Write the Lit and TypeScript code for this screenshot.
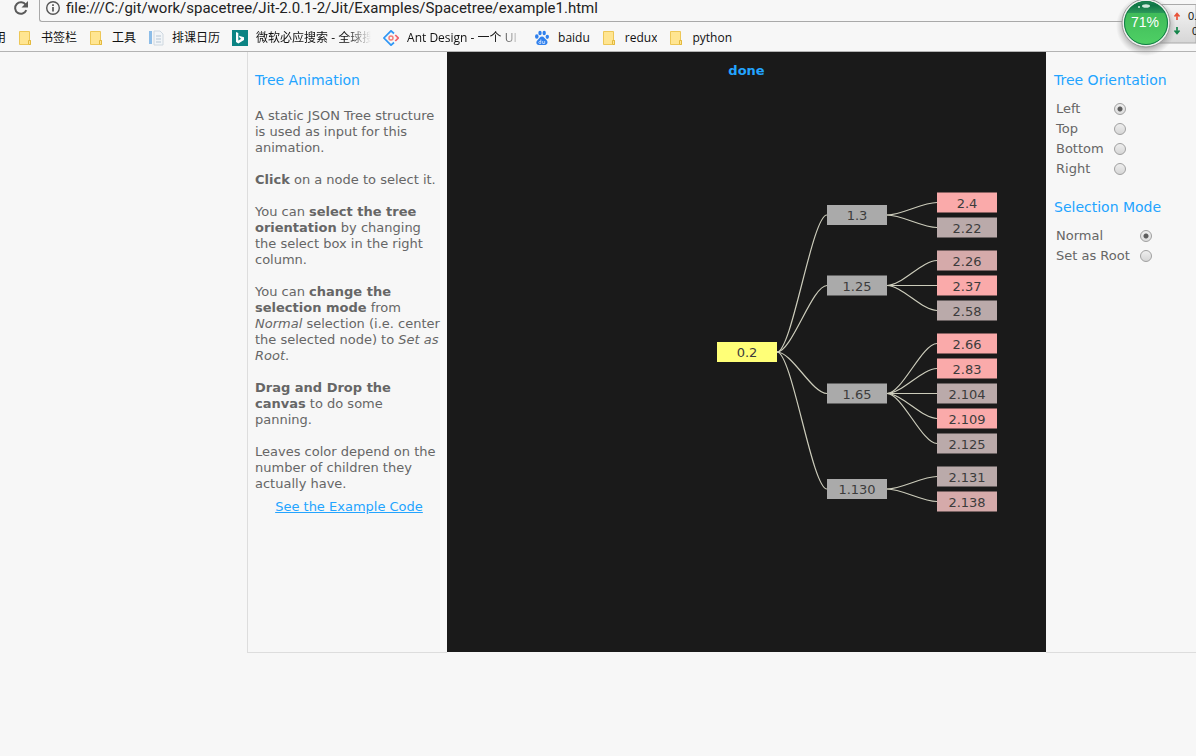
import { LitElement, html, css, svg } from "lit";
import { customElement, state } from "lit/decorators.js";

interface TreeNode { id: string; x: number; y: number; color: string; parent?: string; }

const NODE_W = 60;
const NODE_H = 20;

const GRAY = "#aaaaaa";
const MUTED = "#baaaaa";
const ROSE = "#d5aaaa";
const PINK = "#faaaaa";

const NODES: TreeNode[] = [
  { id: "0.2", x: 270, y: 290, color: "#ffff77" },
  { id: "1.3", x: 380, y: 153, color: GRAY, parent: "0.2" },
  { id: "1.25", x: 380, y: 223.5, color: GRAY, parent: "0.2" },
  { id: "1.65", x: 380, y: 331.5, color: GRAY, parent: "0.2" },
  { id: "1.130", x: 380, y: 427, color: GRAY, parent: "0.2" },
  { id: "2.4", x: 490, y: 140.5, color: PINK, parent: "1.3" },
  { id: "2.22", x: 490, y: 165.5, color: MUTED, parent: "1.3" },
  { id: "2.26", x: 490, y: 198.5, color: ROSE, parent: "1.25" },
  { id: "2.37", x: 490, y: 223.5, color: PINK, parent: "1.25" },
  { id: "2.58", x: 490, y: 248.5, color: MUTED, parent: "1.25" },
  { id: "2.66", x: 490, y: 281.5, color: PINK, parent: "1.65" },
  { id: "2.83", x: 490, y: 306.5, color: PINK, parent: "1.65" },
  { id: "2.104", x: 490, y: 331.5, color: MUTED, parent: "1.65" },
  { id: "2.109", x: 490, y: 356.5, color: PINK, parent: "1.65" },
  { id: "2.125", x: 490, y: 381.5, color: MUTED, parent: "1.65" },
  { id: "2.131", x: 490, y: 414.5, color: MUTED, parent: "1.130" },
  { id: "2.138", x: 490, y: 439.5, color: ROSE, parent: "1.130" },
];

@customElement("browser-bar")
class BrowserBar extends LitElement {
  static styles = css`
    :host { display: block; position: relative; background: #f7f7f7; color: #111; font-family: "Open Sans", "Noto Sans CJK SC", sans-serif; }
    .address { display: flex; height: 22px; }
    .reload { border: 0; padding: 0; background: none; width: 39px; height: 17px; display: flex; justify-content: flex-end; }
    .reload svg { margin-right: 10px; }
    .field { flex: 1; display: flex; align-items: flex-start; gap: 5px; box-sizing: border-box; height: 22px; padding-left: 5px; border: solid #a9a9a9; border-width: 0 0 1px 1px; border-radius: 0 0 0 3px; }
    .field input { flex: 1; min-width: 0; border: 0; padding: 0; margin: 0; background: none; outline: 0; font: 15px/16px Roboto, "Open Sans", sans-serif; color: #222; height: 16px; }
    .marks { display: flex; align-items: center; box-sizing: border-box; height: 30px; padding-top: 2px; border-bottom: 1px solid #b3b3b3; font-size: 12px; line-height: 18px; white-space: nowrap; overflow: hidden; }
    .marks a { color: inherit; text-decoration: none; display: flex; align-items: center; flex: none; overflow: hidden; margin-right: 12px; }
    .marks svg { flex: none; margin-right: 8px; }
    .marks .folder { margin-right: 9px; }
    .marks .cut { width: 6px; justify-content: flex-end; }
    .marks .long { width: 139px; }
    .fade { -webkit-mask-image: linear-gradient(to left, transparent, #000 24px); mask-image: linear-gradient(to left, transparent, #000 24px); }
    .monitor { position: absolute; right: 0; top: 0; width: 96px; height: 56px; }
    .monitor svg { display: block; }
  `;
  folder() {
    return html`<svg class="folder" width="14" height="16" viewBox="0 0 14 16"><path d="M1.500 1.500h10v9h1v4h-11z" fill="#ffe591" stroke="#edc757"/><path d="M10.500 14v-3.500h2v4h-2" fill="#ffe591" stroke="#e3b93e"/></svg>`;
  }
  render() {
    return html`
      <div class="address">
        <button class="reload" aria-label="Reload"><svg width="16" height="17" viewBox="0 0 16 17"><path d="M13.300 10.200A5.800 5.800 0 1 1 12.700 4.700" fill="none" stroke="#5a5a5a" stroke-width="2"/><path d="M15 1v6.500H8.500z" fill="#5a5a5a"/></svg></button>
        <div class="field">
          <svg width="16" height="16" viewBox="0 0 16 16"><circle cx="8" cy="8" r="6.300" fill="none" stroke="#555" stroke-width="1.400"/><path d="M8 7v4.500M8 4.200v1.700" stroke="#555" stroke-width="1.700"/></svg>
          <input aria-label="Address" value="file:///C:/git/work/spacetree/Jit-2.0.1-2/Jit/Examples/Spacetree/example1.html">
        </div>
      </div>
      <nav class="marks">
        <a class="cut" href="#">用</a>
        <a href="#">${this.folder()}书签栏</a>
        <a href="#">${this.folder()}工具</a>
        <a href="#"><svg width="16" height="16" viewBox="0 0 16 16"><path d="M1 1h3v13H1z" fill="#8dbde8"/><path d="M6 1h6l3 3v11H6z" fill="#f2f5f8" stroke="#cfd8e0"/><path d="M8 6h5M8 9h5M8 12h5" stroke="#b5c5d3"/></svg>排课日历</a>
        <a class="long fade" href="#"><svg width="16" height="16" viewBox="0 0 16 16"><path d="M0 0h16v16H0z" fill="#0c8484"/><path d="M4 2l2.300.9v7.500l3-1.700-1.500-.7-.9-2.300L12 7.300v2.600L6.300 13.500 4 12z" fill="#fff"/></svg>微软必应搜索 - 全球搜索</a>
        <a class="long fade" href="#"><svg width="16" height="16" viewBox="0 0 16 16"><path d="M11 3.500L8 .8.9 8 8 15.200l3-2.700" fill="none" stroke="#2f96f5" stroke-width="1.700"/><path d="M12.300 5L15.200 8l-2.900 3" fill="none" stroke="#f0606c" stroke-width="1.700"/><circle cx="8" cy="8" r="2" fill="none" stroke="#f47f7a" stroke-width="1.500"/></svg>Ant Design - 一个 UI</a>
        <a href="#"><svg width="16" height="16" viewBox="0 0 16 16" fill="#2f80ed"><ellipse cx="2.800" cy="6.500" rx="1.800" ry="2.200"/><ellipse cx="6" cy="3" rx="1.700" ry="2.300"/><ellipse cx="10.200" cy="3" rx="1.700" ry="2.300"/><ellipse cx="13.300" cy="6.800" rx="1.700" ry="2.100"/><path d="M8 6.500c2 0 2.500 2 4.500 3.600 2 2 .8 5-1.500 4.800H5c-2.500.2-3.600-2.700-1.600-4.700C5.200 8.500 6 6.500 8 6.500z"/><path d="M6.800 9.500v4H5.300q-1-.9 0-2h1.500M8.700 11v2.500h2V11" fill="none" stroke="#dce9ff" stroke-width=".8"/></svg>baidu</a>
        <a href="#">${this.folder()}redux</a>
        <a href="#">${this.folder()}python</a>
      </nav>
      <div class="monitor">
        <svg width="96" height="56" viewBox="0 0 96 56">
          <defs>
            <linearGradient id="orb" x1="0" y1="0" x2="0" y2="1"><stop offset="0" stop-color="#3ab455"/><stop offset="1" stop-color="#4fd065"/></linearGradient>
            <linearGradient id="plate" x1="0" y1="0" x2="0" y2="1"><stop offset="0" stop-color="#f5f5f5"/><stop offset="1" stop-color="#d6d6d6"/></linearGradient>
            <linearGradient id="cap" x1="0" y1="0" x2="0" y2="1"><stop offset="0" stop-color="#2a9060"/><stop offset=".4" stop-color="#0f7446"/><stop offset="1" stop-color="#2d9a5a"/></linearGradient>
            <radialGradient id="shade"><stop offset=".7" stop-color="#777" stop-opacity=".55"/><stop offset="1" stop-color="#999" stop-opacity="0"/></radialGradient>
            <clipPath id="disc"><circle cx="46" cy="23" r="22"/></clipPath>
          </defs>
          <path d="M46 4.500h50v38.500H46z" fill="url(#plate)" stroke="#aaa"/>
          <circle cx="46" cy="26" r="30" fill="url(#shade)"/>
          <circle cx="46" cy="23" r="24" fill="#eee" stroke="#999"/>
          <circle cx="46" cy="23" r="22" fill="url(#orb)"/>
          <path d="M20 0h52v13H20z" fill="url(#cap)" clip-path="url(#disc)"/>
          <circle cx="46" cy="23" r="21.500" fill="none" stroke="#127a48"/>
          <ellipse cx="46" cy="6" rx="4" ry="1.800" fill="#e6f6ec" opacity=".9"/>
          <circle cx="39" cy="7" r="1" fill="#d8f0e0"/>
          <text x="45" y="27" text-anchor="middle" font-family="Liberation Sans, sans-serif" font-size="14" fill="#fff">71%</text>
          <path d="M77 20v-6M74.500 16.500L77 13.500l2.500 3" fill="none" stroke="#e8543a" stroke-width="1.700"/>
          <path d="M77 27v6M74.500 30.500L77 33.500l2.500-3" fill="none" stroke="#15854a" stroke-width="1.700"/>
          <text x="88" y="20" font-family="Liberation Sans, sans-serif" font-size="11" fill="#111">0.2</text>
          <text x="92" y="35" font-family="Liberation Sans, sans-serif" font-size="11" fill="#111">0</text>
        </svg>
      </div>`;
  }
}

@customElement("space-tree")
class SpaceTree extends LitElement {
  static styles = css`
    :host { display: block; position: relative; min-height: 600px; background: #1a1a1a; overflow: hidden; }
    .status { margin: 0; padding-top: 11px; text-align: center; font-size: 13px; line-height: 16px; font-weight: bold; color: #23a4ff; }
    .drawing { position: absolute; left: 0; top: 0; }
    .node { position: absolute; width: 60px; height: 20px; padding: 2px 0 0; border: 0; background: none; color: #3c3c3c; font: inherit; line-height: 18px; text-align: center; cursor: pointer; }
  `;
  edge(n: TreeNode) {
    const p = NODES.find((m) => m.id === n.parent)!;
    const x1 = p.x + NODE_W, y1 = p.y + NODE_H / 2, y2 = n.y + NODE_H / 2;
    return svg`<path d="M${x1} ${y1}C${x1 + 15} ${y1} ${n.x - 15} ${y2} ${n.x} ${y2}" fill="none" stroke="#ccccbb" stroke-width="1.200"/>`;
  }
  render() {
    return html`
      <svg class="drawing" width="600" height="600">
        ${NODES.filter((n) => n.parent).map((n) => this.edge(n))}
        ${NODES.map((n) => svg`<rect x=${n.x} y=${n.y} width=${NODE_W} height=${NODE_H} fill=${n.color}/>`)}
      </svg>
      ${NODES.map((n) => html`<button class="node" style="left:${n.x}px;top:${Math.ceil(n.y)}px">${n.id}</button>`)}
      <p class="status">done</p>`;
  }
}

@customElement("app-root")
class AppRoot extends LitElement {
  @state() orientation = "Left";
  @state() mode = "Normal";
  static styles = css`
    :host { display: block; min-height: 100vh; background: #f7f7f7; color: #666; font: 13px/16px "DejaVu Sans", Verdana, sans-serif; }
    .page { display: grid; grid-template-columns: 200px minmax(0, 1fr) 150px; margin-left: 247px; }
    space-tree { margin-bottom: 1px; }
    .side { border-bottom: 1px solid #ddd; }
    .info { border-left: 1px solid #ddd; padding: 0 4px 0 7px; }
    h2 { margin: 0; padding: 19px 0; font-size: 14px; line-height: 18px; font-weight: normal; color: #23a4ff; }
    p { margin: 0 0 16px; }
    .info p:last-of-type { margin-bottom: 7px; }
    .more { text-align: center; }
    a { color: #23a4ff; }
    .options { padding-left: 8px; }
    .options h2 { padding-bottom: 9px; }
    .options table + h2 { padding-top: 18px; }
    table { border-spacing: 2px; border-collapse: separate; margin: 0; }
    td { padding: 0; height: 18px; line-height: 18px; }
    td:first-child { padding-right: 6px; }
    input { appearance: none; display: block; width: 12px; height: 12px; margin: 0 3px 0 2px; border: 1px solid #a0a0a0; border-radius: 50%; background: linear-gradient(#eee, #d6d6d6); }
    input:checked { background: radial-gradient(circle, #5c5c5c 0 2px, transparent 3px), linear-gradient(#eee, #ddd); }
  `;
  group(name: string, options: string[], current: string, pick: (v: string) => void) {
    return html`<table role="presentation">${options.map((o) => html`<tr>
      <td><label for="${name}-${o}">${o}</label></td>
      <td><input type="radio" id="${name}-${o}" name=${name} .checked=${o === current} @change=${() => pick(o)}></td></tr>`)}</table>`;
  }
  render() {
    return html`
      <browser-bar></browser-bar>
      <main class="page">
        <section class="side info">
          <h2>Tree Animation</h2>
          <p>A static JSON Tree structure is used as input for this animation.</p>
          <p><b>Click</b> on a node to select it.</p>
          <p>You can <b>select the tree orientation</b> by changing the select box in the right column.</p>
          <p>You can <b>change the selection mode</b> from <i>Normal</i> selection (i.e. center the selected node) to <i>Set as Root</i>.</p>
          <p><b>Drag and Drop the canvas</b> to do some panning.</p>
          <p>Leaves color depend on the number of children they actually have.</p>
          <div class="more"><a href="#">See the Example Code</a></div>
        </section>
        <space-tree></space-tree>
        <section class="side options">
          <h2>Tree Orientation</h2>
          ${this.group("orientation", ["Left", "Top", "Bottom", "Right"], this.orientation, (v) => (this.orientation = v))}
          <h2>Selection Mode</h2>
          ${this.group("mode", ["Normal", "Set as Root"], this.mode, (v) => (this.mode = v))}
        </section>
      </main>`;
  }
}
